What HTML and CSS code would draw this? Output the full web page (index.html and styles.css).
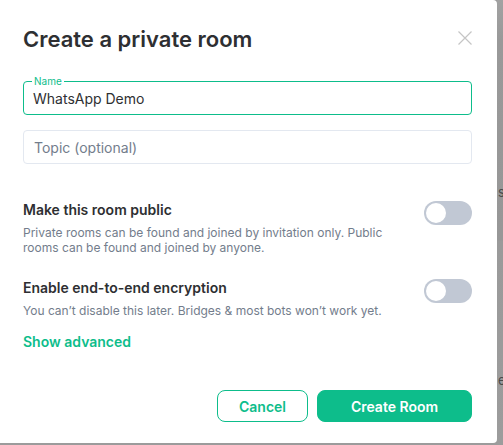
FILE: index.html
```html
<!DOCTYPE html>
<html>
<head>
<meta charset="utf-8">
<link rel="stylesheet" href="styles.css">
</head>
<body>
<div class="backdrop">
  <span class="bg-letter bg-s">s</span>
  <span class="bg-letter bg-e">e</span>
</div>
<div class="dialog">
  <div class="header">
    <h1 class="title">Create a private room</h1>
    <svg class="close" width="14" height="14" viewBox="0 0 14 14"><path d="M0.5 0.5 L13.5 13.5 M13.5 0.5 L0.5 13.5" stroke="#c5c5c5" stroke-width="1.2" fill="none"/></svg>
  </div>
  <div class="field field-active">
    <span class="field-label">Name</span>
    <span class="field-value">WhatsApp Demo</span>
  </div>
  <div class="field field-topic">
    <span class="field-placeholder">Topic (optional)</span>
  </div>
  <div class="setting setting-public">
    <div class="setting-text">
      <div class="setting-title">Make this room public</div>
      <div class="setting-desc">Private rooms can be found and joined by invitation only. Public rooms can be found and joined by anyone.</div>
    </div>
    <div class="toggle"><div class="knob"></div></div>
  </div>
  <div class="setting setting-e2e">
    <div class="setting-text">
      <div class="setting-title">Enable end-to-end encryption</div>
      <div class="setting-desc">You can’t disable this later. Bridges &amp; most bots won’t work yet.</div>
    </div>
    <div class="toggle"><div class="knob"></div></div>
  </div>
  <div class="advanced">Show advanced</div>
  <div class="buttons">
    <button class="btn btn-cancel">Cancel</button>
    <button class="btn btn-primary">Create Room</button>
  </div>
</div>
</body>
</html>
```
FILE: styles.css
```css
html, body {
  margin: 0;
  padding: 0;
  width: 503px;
  height: 445px;
  overflow: hidden;
  font-family: Inter, "Noto Sans", sans-serif;
}
body {
  background: #9b9b9b;
  position: relative;
}
.backdrop {
  position: absolute;
  left: 497px;
  top: 0;
  width: 6px;
  height: 445px;
  background: linear-gradient(to bottom, #a2a2a2 0px, #999 40px, #979797 240px, #9a9a9a 241px, #9c9c9c 445px);
  overflow: hidden;
}
.bg-letter {
  position: absolute;
  left: 1px;
  font-size: 13px;
  color: #4a4a4a;
}
.bg-s { top: 184px; }
.bg-e { top: 372px; }
.dialog {
  position: absolute;
  left: 0;
  top: 0;
  width: 449px;
  height: 443px;
  padding: 0 25px 0 23px;
  background: #fff;
  border-radius: 0 4px 4px 0;
  box-sizing: content-box;
  display: flex;
  flex-direction: column;
  color: #2e2f32;
}
.header {
  display: flex;
  justify-content: space-between;
  align-items: flex-start;
  height: 81px;
}
.title {
  margin: 26px 0 0 0;
  font-size: 22px;
  line-height: 27px;
  font-weight: 600;
  color: #2e2f32;
}
.close {
  margin-top: 31px;
  margin-right: 0;
}
.field {
  position: relative;
  height: 34px;
  box-sizing: border-box;
  border: 1px solid #e3e8f0;
  border-radius: 4px;
  display: flex;
  align-items: center;
  padding-left: 9px;
}
.field-active {
  border-color: #0dbd8b;
}
.field-label {
  position: absolute;
  left: 8px;
  top: -7px;
  font-size: 10px;
  line-height: 12px;
  color: #0dbd8b;
  background: #fff;
  padding: 0 2px;
}
.field-value {
  font-size: 14px;
  color: #2e2f32;
}
.field-topic {
  margin-top: 15px;
}
.field-placeholder {
  font-size: 14px;
  color: #737d8c;
  padding-left: 1px;
}
.setting {
  display: flex;
  justify-content: space-between;
  align-items: flex-start;
}
.setting-public {
  margin-top: 36px;
}
.setting-e2e {
  margin-top: 23px;
}
.setting-text {
  width: 385px;
}
.setting-title {
  font-size: 14px;
  line-height: 20px;
  font-weight: 600;
  color: #2e2f32;
}
.setting-desc {
  margin-top: 5px;
  font-size: 12px;
  line-height: 15px;
  color: #737d8c;
}
.toggle {
  width: 48px;
  height: 24px;
  border-radius: 12px;
  background: #c1c8d4;
  position: relative;
  flex: none;
  margin-top: 1px;
}
.knob {
  position: absolute;
  left: 2px;
  top: 2px;
  width: 20px;
  height: 20px;
  border-radius: 50%;
  background: #fff;
}
.advanced {
  margin-top: 14px;
  font-size: 14px;
  line-height: 20px;
  font-weight: 600;
  color: #0dbd8b;
}
.buttons {
  margin-top: 38px;
  display: flex;
  justify-content: flex-end;
  gap: 9px;
}
.btn {
  height: 32px;
  border-radius: 8px;
  font-family: Inter, "Noto Sans", sans-serif;
  font-size: 14px;
  font-weight: 600;
  box-sizing: border-box;
  cursor: pointer;
}
.btn-cancel {
  width: 91px;
  background: #fff;
  border: 1px solid #0dbd8b;
  color: #0dbd8b;
}
.btn-primary {
  width: 155px;
  background: #0dbd8b;
  border: 1px solid #0dbd8b;
  color: #fff;
}
```
